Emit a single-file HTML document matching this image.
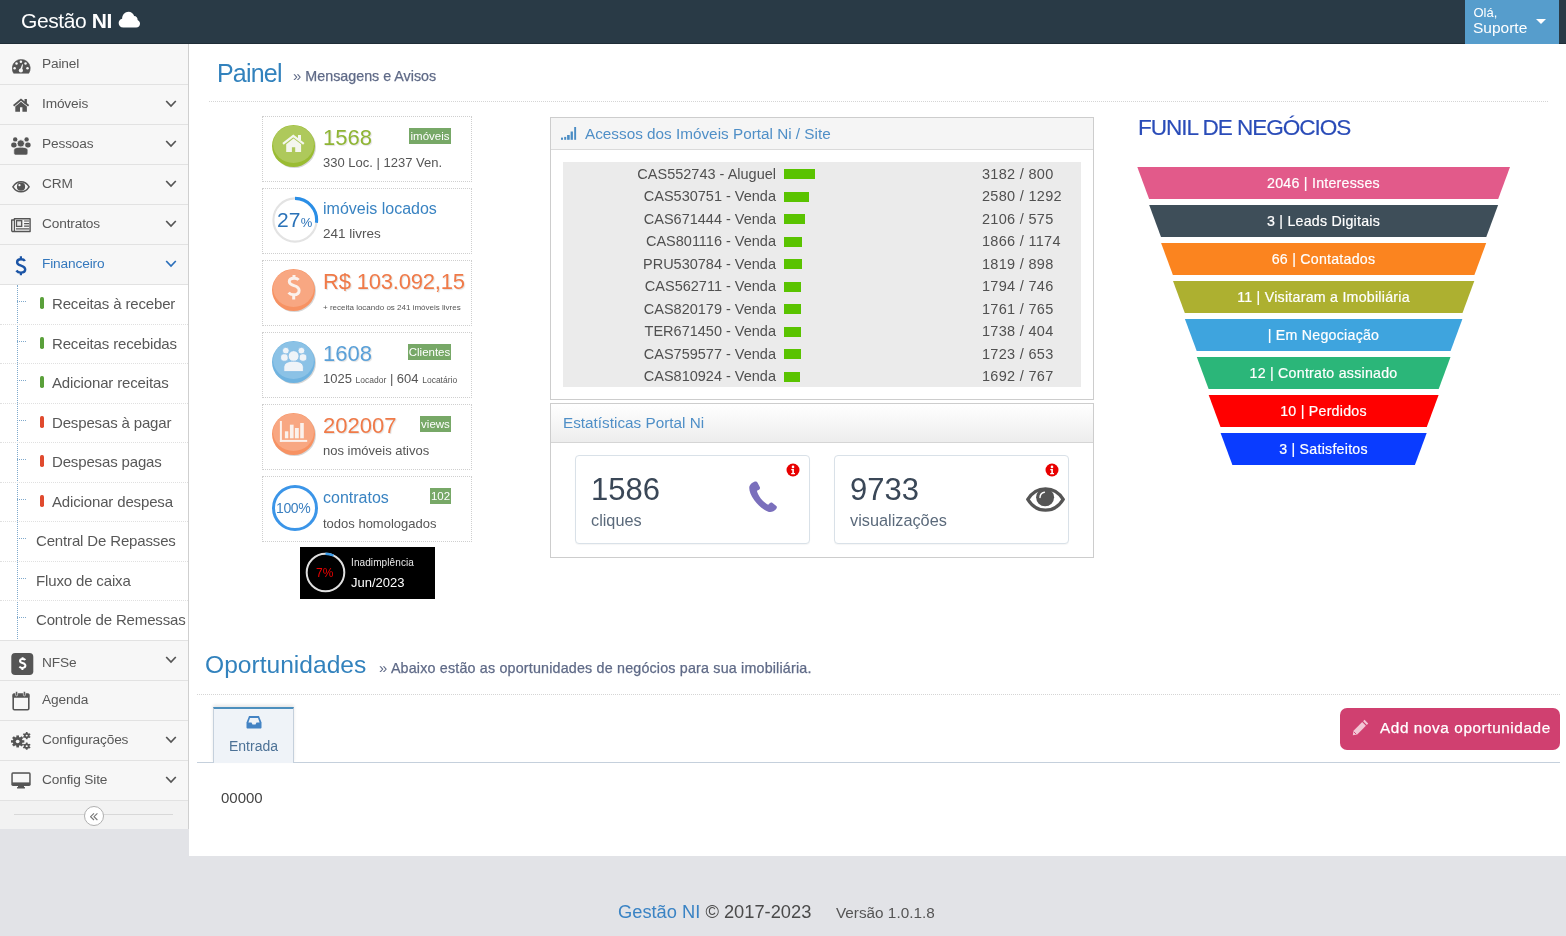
<!DOCTYPE html><html><head><meta charset="utf-8"><style>
*{box-sizing:border-box;margin:0;padding:0}
html,body{width:1566px;height:936px;overflow:hidden}
body{-webkit-font-smoothing:antialiased;will-change:transform;font-family:"Liberation Sans",sans-serif;background:#e2e3e7;position:relative;color:#555}
.abs{position:absolute}
.nw{white-space:nowrap}
#nav{left:0;top:0;width:1566px;height:44px;background:#293a46;border-bottom:1px solid #1f2d37}
#logo{left:21px;top:9px;color:#fff;font-size:21px;line-height:24px;white-space:nowrap;letter-spacing:-0.4px}
#user{left:1465px;top:0;width:94px;height:44px;background:#569dcc;color:#fff}
#side{left:0;top:44px;width:189px;height:785px;background:#f7f7f7;border-right:1px solid #cfcfcf}
.mi{position:absolute;left:0;width:188px;height:40px;border-bottom:1px solid #e2e2e2;background:#f7f7f7}
.mi .t{position:absolute;left:42px;top:10.7px;font-size:13.7px;letter-spacing:-0.15px;line-height:16px;color:#585858;white-space:nowrap}
.mi svg{position:absolute}
#main{left:189px;top:44px;width:1377px;height:812px;background:#fff}
.si{position:absolute;left:0;width:188px;height:40px;border-bottom:1px dotted #e0e0e0}
.si .t{position:absolute;top:9.5px;font-size:15px;letter-spacing:-0.15px;line-height:18px;color:#585858;white-space:nowrap}
.si .tick{position:absolute;left:17px;top:16px;width:9px;border-top:1px dotted #7fa9cc}
.si .bar{position:absolute;left:40.2px;top:12.4px;width:3.4px;height:11.8px;border-radius:1.7px}
.ib{position:absolute;left:262px;width:210px;height:66px;border:1px dotted #cfcfcf;background:#fff}
.lab{position:absolute;background:#77a867;color:#fff;font-size:11.5px;line-height:16px;height:16px;text-align:center;white-space:nowrap}
.row td{}
</style></head><body>
<div id="nav" class="abs"><div id="logo" class="abs">Gestão <b>NI</b><svg width="23" height="17" viewBox="0 0 28 20" preserveAspectRatio="none" style="position:relative;top:0px;margin-left:6px"><path d="M6.5 19.5C3 19.5 0.8 17 0.8 14.2 0.8 11.6 2.6 9.6 5 9.2 5 4.6 8.5 1 12.8 1 16 1 18.7 3 19.7 5.8 22.3 5.9 24.1 8 23.9 10.6 25.6 11.4 26.8 13 26.8 15 26.8 17.6 24.8 19.5 22.2 19.5Z" fill="#fff"/></svg></div></div>
<div id="user" class="abs"><div class="abs nw" style="left:8.5px;top:5.7px;font-size:13px;line-height:14px">Olá,</div><div class="abs nw" style="left:8px;top:19px;font-size:15.5px;line-height:17px">Suporte</div><svg class="abs" style="left:71.3px;top:19.1px" width="10" height="5" viewBox="0 0 10 5"><path d="M0 0H10L5 5Z" fill="#fff"/></svg></div>
<div id="side" class="abs">
<div class="mi" style="top:0;height:41px;padding-top:1px"><div class="abs" style="left:0;top:1px;width:188px;height:40px"><svg style="left:12px;top:14px" width="19" height="15" viewBox="0 0 19 15"><path d="M1.6 14.2A9 9 0 1 1 16.8 14.2Z" fill="#555" stroke="#555" stroke-width="0.6" stroke-linejoin="round"/><g fill="#f7f7f7"><circle cx="8.9" cy="2.8" r="1.25"/><circle cx="4.5" cy="4.6" r="1.25"/><circle cx="13.5" cy="4.6" r="1.25"/><circle cx="2.6" cy="9.2" r="1.25"/><circle cx="15.5" cy="9.2" r="1.25"/><circle cx="8.9" cy="11.5" r="2.1"/><path d="M7.9 11.3L10.2 5.2 11 5.4 9.9 11.7Z"/></g></svg><div class="t">Painel</div></div></div>
<div class="mi" style="top:41px"><svg style="left:13px;top:13px" width="17" height="15" viewBox="0 0 17 15"><path d="M0.6 7.8L8 1.6 15.6 7.8" fill="none" stroke="#555" stroke-width="1.8"/><rect x="11.5" y="1" width="2.4" height="4.6" fill="#555"/><path d="M2.3 8.4L8 3.8 13.9 8.4V13.8H9.4V9.3H7V13.8H2.3Z" fill="#555"/></svg><div class="t">Imóveis</div><svg style="left:165px;top:15.3px" width="12" height="8" viewBox="0 0 12 8"><path d="M1.2 1L6 6 10.8 1" fill="none" stroke="#555" stroke-width="1.7"/></svg></div>
<div class="mi" style="top:81px"><svg style="left:11px;top:11.5px" width="20" height="19" viewBox="0 0 20 19"><g fill="#555"><circle cx="4.2" cy="2.4" r="2.2"/><circle cx="15.6" cy="2.4" r="2.2"/><rect x="0.2" y="5.4" width="5.4" height="5" rx="2.2"/><rect x="14.2" y="5.4" width="5.4" height="5" rx="2.2"/></g><circle cx="9.8" cy="6.5" r="3.7" fill="#555" stroke="#f7f7f7" stroke-width="0.8"/><path d="M2.8 16V13.4C2.8 11.4 4.6 10.2 9.8 10.2 15 10.2 16.9 11.4 16.9 13.4V16C16.9 17.4 16 18.1 14.6 18.1H5.1C3.7 18.1 2.8 17.4 2.8 16Z" fill="#555" stroke="#f7f7f7" stroke-width="0.7"/></svg><div class="t">Pessoas</div><svg style="left:165px;top:15.3px" width="12" height="8" viewBox="0 0 12 8"><path d="M1.2 1L6 6 10.8 1" fill="none" stroke="#555" stroke-width="1.7"/></svg></div>
<div class="mi" style="top:121px"><svg style="left:12px;top:15.5px" width="19" height="12" viewBox="0 0 19 12"><path d="M0.9 5.8C3.2 2.2 6 0.8 9 0.8 12 0.8 14.8 2.2 17.1 5.8 14.8 9.4 12 10.8 9 10.8 6 10.8 3.2 9.4 0.9 5.8Z" fill="none" stroke="#555" stroke-width="1.5"/><circle cx="9" cy="5.7" r="4.1" fill="#555"/><circle cx="7.5" cy="4.2" r="1.1" fill="#f7f7f7"/></svg><div class="t">CRM</div><svg style="left:165px;top:15.3px" width="12" height="8" viewBox="0 0 12 8"><path d="M1.2 1L6 6 10.8 1" fill="none" stroke="#555" stroke-width="1.7"/></svg></div>
<div class="mi" style="top:161px"><svg style="left:11px;top:13px" width="21" height="15" viewBox="0 0 21 15"><path d="M3.4 0.7H19.1V13.5H1.9C1.2 13.5 0.7 13 0.7 12.3V2H3.4Z" fill="none" stroke="#555" stroke-width="1.4" stroke-linejoin="round"/><path d="M3.4 1V13" stroke="#555" stroke-width="1.2"/><rect x="5.5" y="2.7" width="5.2" height="5.7" fill="#e6e6e6" stroke="#555" stroke-width="1.3"/><path d="M13.1 3H18.2M13.1 5.6H18.2M13.1 8.2H18.2M4.9 10.9H18.2" stroke="#555" stroke-width="1.2"/></svg><div class="t">Contratos</div><svg style="left:165px;top:15.3px" width="12" height="8" viewBox="0 0 12 8"><path d="M1.2 1L6 6 10.8 1" fill="none" stroke="#555" stroke-width="1.7"/></svg></div>
<div class="mi" style="top:201px"><svg style="left:15px;top:11px" width="12" height="20" viewBox="0 0 12 20"><path d="M9.9 5C9.2 3.7 7.7 3.2 5.9 3.2 3.6 3.2 2.1 4.4 2.1 6.2 2.1 8.1 3.8 9 6.1 9.7 8.6 10.5 10.2 11.6 10.2 13.6 10.2 15.6 8.4 16.6 5.9 16.6 3.8 16.6 2.3 15.9 1.4 14.5" fill="none" stroke="#1c55a6" stroke-width="2.4"/><path d="M5.9 0.2V3.4M5.9 16.3V19.3" stroke="#1c55a6" stroke-width="2.2"/></svg><div class="t" style="color:#3478bd">Financeiro</div><svg style="left:165px;top:15.3px" width="12" height="8" viewBox="0 0 12 8"><path d="M1.2 1L6 6 10.8 1" fill="none" stroke="#2b6fba" stroke-width="1.7"/></svg></div>
<div class="abs" style="left:0;top:241px;width:188px;height:356px;background:#fff">
<div class="abs" style="left:17px;top:0;height:356px;border-left:1px dotted #7fa9cc"></div>
<div class="si" style="top:0px;height:40px;"><div class="tick"></div><div class="bar" style="background:#5aa03a"></div><div class="t" style="left:52px">Receitas à receber</div></div>
<div class="si" style="top:40px;height:39px;"><div class="tick"></div><div class="bar" style="background:#5aa03a"></div><div class="t" style="left:52px">Receitas recebidas</div></div>
<div class="si" style="top:79px;height:40px;"><div class="tick"></div><div class="bar" style="background:#5aa03a"></div><div class="t" style="left:52px">Adicionar receitas</div></div>
<div class="si" style="top:119px;height:39px;"><div class="tick"></div><div class="bar" style="background:#e04a2e"></div><div class="t" style="left:52px">Despesas à pagar</div></div>
<div class="si" style="top:158px;height:40px;"><div class="tick"></div><div class="bar" style="background:#e04a2e"></div><div class="t" style="left:52px">Despesas pagas</div></div>
<div class="si" style="top:198px;height:39px;"><div class="tick"></div><div class="bar" style="background:#e04a2e"></div><div class="t" style="left:52px">Adicionar despesa</div></div>
<div class="si" style="top:237px;height:40px;"><div class="tick"></div><div class="t" style="left:36px">Central De Repasses</div></div>
<div class="si" style="top:277px;height:39px;"><div class="tick"></div><div class="t" style="left:36px">Fluxo de caixa</div></div>
<div class="si" style="top:316px;height:40px;border-bottom:none;"><div class="tick"></div><div class="t" style="left:36px">Controle de Remessas</div></div>
</div>
<div class="abs" style="left:0;top:596px;width:188px;border-top:1px solid #e2e2e2"></div>
<div class="mi" style="top:597px"><svg style="left:11px;top:11px" width="23" height="23" viewBox="0 0 23 23"><rect x="0.3" y="1" width="22" height="22" rx="3.8" fill="#555"/><path d="M14.3 8C13.9 7.4 13 7 11.6 7 10 7 9 7.8 9 8.9 9 10.1 10 10.6 11.5 11 13.3 11.5 14.4 12.2 14.4 13.6 14.4 15 13.2 15.9 11.4 15.9 10.1 15.9 9 15.4 8.4 14.7" fill="none" stroke="#fff" stroke-width="2"/><path d="M11.6 5.2V7.3M11.4 15.6V17.9" stroke="#fff" stroke-width="2"/></svg><div class="t" style="top:13.5px">NFSe</div><svg style="left:165px;top:15.3px" width="12" height="8" viewBox="0 0 12 8"><path d="M1.2 1L6 6 10.8 1" fill="none" stroke="#555" stroke-width="1.7"/></svg></div>
<div class="mi" style="top:637px"><svg style="left:12px;top:10px" width="19" height="20" viewBox="0 0 19 20"><rect x="1.2" y="3.4" width="15.6" height="15.3" rx="1.2" fill="none" stroke="#555" stroke-width="1.6"/><rect x="0.6" y="2.6" width="16.8" height="4.2" rx="1" fill="#555"/><rect x="3.6" y="0.5" width="2" height="4.4" rx="0.9" fill="#555" stroke="#f7f7f7" stroke-width="0.6"/><rect x="11.4" y="0.5" width="2" height="4.4" rx="0.9" fill="#555" stroke="#f7f7f7" stroke-width="0.6"/></svg><div class="t">Agenda</div></div>
<div class="mi" style="top:677px"><svg style="left:11px;top:11px" width="20" height="18" viewBox="0 0 21 21" preserveAspectRatio="none"><g fill="#555"><circle cx="7" cy="11" r="5.2"/><g transform="translate(7 11)"><rect x="-1.4" y="-7" width="2.8" height="14"/><rect x="-1.4" y="-7" width="2.8" height="14" transform="rotate(45)"/><rect x="-1.4" y="-7" width="2.8" height="14" transform="rotate(90)"/><rect x="-1.4" y="-7" width="2.8" height="14" transform="rotate(135)"/></g><circle cx="16.5" cy="4.2" r="3"/><g transform="translate(16.5 4.2)"><rect x="-0.9" y="-4.2" width="1.8" height="8.4"/><rect x="-0.9" y="-4.2" width="1.8" height="8.4" transform="rotate(60)"/><rect x="-0.9" y="-4.2" width="1.8" height="8.4" transform="rotate(120)"/></g><circle cx="16.5" cy="16.5" r="3"/><g transform="translate(16.5 16.5)"><rect x="-0.9" y="-4.2" width="1.8" height="8.4"/><rect x="-0.9" y="-4.2" width="1.8" height="8.4" transform="rotate(60)"/><rect x="-0.9" y="-4.2" width="1.8" height="8.4" transform="rotate(120)"/></g></g><circle cx="7" cy="11" r="2" fill="#f7f7f7"/><circle cx="16.5" cy="4.2" r="1.1" fill="#f7f7f7"/><circle cx="16.5" cy="16.5" r="1.1" fill="#f7f7f7"/></svg><div class="t">Configurações</div><svg style="left:165px;top:15.3px" width="12" height="8" viewBox="0 0 12 8"><path d="M1.2 1L6 6 10.8 1" fill="none" stroke="#555" stroke-width="1.7"/></svg></div>
<div class="mi" style="top:717px"><svg style="left:11px;top:10.5px" width="20" height="18" viewBox="0 0 20 18"><rect x="0.3" y="0.3" width="19.4" height="13.6" rx="1.6" fill="#555"/><rect x="1.8" y="1.8" width="16.4" height="8.6" fill="#f7f7f7"/><rect x="7" y="13.5" width="6" height="2" fill="#555"/><rect x="6" y="15" width="8" height="1.6" rx="0.5" fill="#555"/></svg><div class="t">Config Site</div><svg style="left:165px;top:15.3px" width="12" height="8" viewBox="0 0 12 8"><path d="M1.2 1L6 6 10.8 1" fill="none" stroke="#555" stroke-width="1.7"/></svg></div>
<div class="abs" style="left:0;top:757px;width:188px;height:28px;background:#f2f2f2"><div class="abs" style="left:14px;top:13px;width:159px;border-top:1px solid #d8d8d8"></div><div class="abs" style="left:84px;top:5px;width:20px;height:20px;border-radius:50%;border:1.3px solid #b0b0b0;background:#fff"></div><svg class="abs" style="left:89.8px;top:11.6px" width="9" height="8" viewBox="0 0 9 8"><path d="M4 0.4L0.6 3.7 4 7M7.4 0.4L4 3.7 7.4 7" fill="none" stroke="#777" stroke-width="1.1"/></svg></div>
</div>
<div id="main" class="abs"></div>
<div class="abs nw" style="left:217px;top:59px;font-size:25px;letter-spacing:-0.8px;line-height:28px;color:#3282bd">Painel</div>
<div class="abs nw" style="left:293px;top:67px;font-size:14.3px;line-height:18px;color:#5f6a87;-webkit-text-stroke:0.25px #5f6a87"><span style="font-size:15px;-webkit-text-stroke:0">&raquo;</span> Mensagens e Avisos</div>
<div class="abs" style="left:209px;top:101px;width:1339px;border-top:1px dotted #d5d5d5"></div>
<div class="ib" style="top:116px"></div>
<div class="ib" style="top:188px"></div>
<div class="ib" style="top:260px"></div>
<div class="ib" style="top:332px"></div>
<div class="ib" style="top:404px"></div>
<div class="ib" style="top:476px"></div>
<svg class="abs" style="left:272px;top:125px" width="46" height="45" viewBox="0 0 46 45"><ellipse cx="22.5" cy="22" rx="21.5" ry="21" fill="rgba(0,0,0,0.16)"/><ellipse cx="21.5" cy="21" rx="21.5" ry="21" fill="#9abc32"/><ellipse cx="21.5" cy="19.2" rx="20.4" ry="18.7" fill="rgba(255,255,255,0.2)"/><path d="M11 18.9L21.3 10.8 31.8 18.9" fill="none" stroke="#f4f6ee" stroke-width="2.2"/><rect x="26" y="10" width="3" height="5" fill="#f4f6ee"/><path d="M14.2 19.2L21.5 13.6 29.1 19.2V26.9H23.2V22.2H19.9V26.9H14.2Z" fill="#f4f6ee"/></svg>
<div class="abs nw" style="left:323px;top:125px;font-size:22px;line-height:26px;color:#8fb534;text-shadow:1px 1px 1px rgba(0,0,0,0.12)">1568</div>
<div class="lab" style="left:409px;top:128px;width:42px">imóveis</div>
<div class="abs nw" style="left:323px;top:155px;font-size:13px;line-height:15px;color:#555">330 Loc. | 1237 Ven.</div>
<svg class="abs" style="left:271px;top:196px" width="48" height="48" viewBox="0 0 48 48"><circle cx="24" cy="24" r="21.6" fill="none" stroke="#e3e3e3" stroke-width="2.1"/><path d="M24 2.3999999999999986A21.6 21.6 0 0 1 45.43 26.71" fill="none" stroke="#2a8ee6" stroke-width="3.1"/></svg>
<div class="abs nw" style="left:277px;top:209.3px;font-size:21px;line-height:22px;color:#2a72b8;letter-spacing:0px">27<span style="font-size:13px;letter-spacing:-0.3px;margin-left:0.5px">%</span></div>
<div class="abs nw" style="left:323px;top:199px;font-size:16px;line-height:19px;color:#3983c2">imóveis locados</div>
<div class="abs nw" style="left:323px;top:226px;font-size:13.5px;line-height:16px;color:#555">241 livres</div>
<svg class="abs" style="left:272px;top:269px" width="46" height="45" viewBox="0 0 46 45"><ellipse cx="22.5" cy="22" rx="21.5" ry="21" fill="rgba(0,0,0,0.16)"/><ellipse cx="21.5" cy="21" rx="21.5" ry="21" fill="#f79263"/><ellipse cx="21.5" cy="19.2" rx="20.4" ry="18.7" fill="rgba(255,255,255,0.2)"/><path d="M26.6 10.9C25.8 9.9 24.3 9.2 22 9.2 19 9.2 17.3 10.6 17.3 12.6 17.3 14.8 19.2 15.8 22 16.6 25.3 17.5 27.1 18.7 27.1 21.4 27.1 24.2 24.8 25.7 21.7 25.7 19.4 25.7 17.6 24.8 16.6 23.6" fill="none" stroke="#fbf1ec" stroke-width="3"/><path d="M22 6V10M21.7 25V30.6" stroke="#fbf1ec" stroke-width="3"/></svg>
<div class="abs nw" style="left:323px;top:269px;font-size:22px;line-height:26px;color:#f07a48;text-shadow:1px 1px 1px rgba(0,0,0,0.12);letter-spacing:-0.2px">R$ 103.092,15</div>
<div class="abs nw" style="left:323px;top:303px;font-size:8px;line-height:10px;color:#555">+ receita locando os 241 imóveis livres</div>
<svg class="abs" style="left:272px;top:341px" width="46" height="45" viewBox="0 0 46 45"><ellipse cx="22.5" cy="22" rx="21.5" ry="21" fill="rgba(0,0,0,0.16)"/><ellipse cx="21.5" cy="21" rx="21.5" ry="21" fill="#6fb3e0"/><ellipse cx="21.5" cy="19.2" rx="20.4" ry="18.7" fill="rgba(255,255,255,0.2)"/><g fill="#eff4f8" stroke="#84bbe4" stroke-width="0.8"><circle cx="13.8" cy="9.7" r="3.4"/><circle cx="29.4" cy="9.7" r="3.4"/><rect x="8.6" y="12.8" width="7.6" height="7.4" rx="3"/><rect x="27.2" y="12.8" width="7.6" height="7.4" rx="3"/><circle cx="21.6" cy="15.1" r="5.4"/><path d="M11.8 30.6V26.5C11.8 22.6 15 20.2 21.6 20.2 28.2 20.2 31.4 22.6 31.4 26.5V30.6Z"/></g></svg>
<div class="abs nw" style="left:323px;top:341px;font-size:22px;line-height:26px;color:#5aa0d8;text-shadow:1px 1px 1px rgba(0,0,0,0.12)">1608</div>
<div class="lab" style="left:408px;top:344px;width:43px">Clientes</div>
<div class="abs nw" style="left:323px;top:371px;font-size:13px;line-height:15px;color:#555">1025 <span style="font-size:8.5px">Locador</span> | 604 <span style="font-size:8.5px">Locatário</span></div>
<svg class="abs" style="left:272px;top:413px" width="46" height="45" viewBox="0 0 46 45"><ellipse cx="22.5" cy="22" rx="21.5" ry="21" fill="rgba(0,0,0,0.16)"/><ellipse cx="21.5" cy="21" rx="21.5" ry="21" fill="#f79263"/><ellipse cx="21.5" cy="19.2" rx="20.4" ry="18.7" fill="rgba(255,255,255,0.2)"/><g fill="#fbf1ec"><rect x="7.9" y="8" width="2" height="20.9"/><rect x="7.9" y="26.9" width="27.3" height="2"/><rect x="12.9" y="18.3" width="3.4" height="7"/><rect x="17.9" y="11.7" width="3.7" height="13.6"/><rect x="22.9" y="15" width="3.9" height="10.3"/><rect x="28.2" y="10" width="3.6" height="15.3"/></g></svg>
<div class="abs nw" style="left:323px;top:413px;font-size:22px;line-height:26px;color:#f07a48;text-shadow:1px 1px 1px rgba(0,0,0,0.12)">202007</div>
<div class="lab" style="left:420px;top:416px;width:31px">views</div>
<div class="abs nw" style="left:323px;top:443px;font-size:13px;line-height:15px;color:#555">nos imóveis ativos</div>
<svg class="abs" style="left:271px;top:484px" width="48" height="48" viewBox="0 0 48 48"><circle cx="24" cy="24" r="21.5" fill="none" stroke="#3b95e8" stroke-width="3"/></svg>
<div class="abs nw" style="left:276px;top:500px;font-size:14px;line-height:16px;color:#3a7fc0;letter-spacing:-0.4px">100%</div>
<div class="abs nw" style="left:323px;top:488px;font-size:16px;line-height:19px;color:#3983c2">contratos</div>
<div class="lab" style="left:430px;top:488px;width:21px">102</div>
<div class="abs nw" style="left:323px;top:516px;font-size:13px;line-height:15px;color:#555">todos homologados</div>
<div class="abs" style="left:300px;top:547px;width:135px;height:52px;background:#000"><svg class="abs" style="left:5px;top:5px" width="42" height="42" viewBox="0 0 42 42"><circle cx="20.5" cy="20.5" r="18.8" fill="none" stroke="#e0e0e0" stroke-width="2"/><path d="M20.5 1.6999999999999993A18.8 18.8 0 0 1 28.50 3.49" fill="none" stroke="#3a9be8" stroke-width="2.4"/></svg><div class="abs nw" style="left:16px;top:18.5px;font-size:12px;line-height:14px;color:#e00">7%</div><div class="abs nw" style="left:51px;top:9.5px;font-size:10px;line-height:11px;color:#e8e8e8;letter-spacing:0.1px">Inadimplência</div><div class="abs nw" style="left:51px;top:28px;font-size:13px;line-height:15px;color:#fff">Jun/2023</div></div>
<div class="abs" style="left:550px;top:117px;width:544px;height:283px;border:1px solid #cdcdcd;background:#fff"><div class="abs" style="left:0;top:0;width:542px;height:32px;background:#f5f5f5;border-bottom:1px solid #dadada"></div><svg class="abs" style="left:10px;top:9px" width="16" height="14" viewBox="0 0 16 14"><g fill="#4a8cc4"><rect x="0" y="10.6" width="2" height="2.2"/><rect x="3.2" y="9.9" width="2" height="2.9"/><rect x="6.1" y="8" width="2.6" height="4.8"/><rect x="9.6" y="4.5" width="2.3" height="8.3"/><rect x="13.2" y="0" width="1.9" height="12.8"/></g></svg><div class="abs nw" style="left:34px;top:7px;font-size:15.3px;line-height:18px;color:#4f8fc7">Acessos dos Imóveis Portal Ni / Site</div><div class="abs" style="left:12px;top:44px;width:518px;height:225px;background:#ebebeb"></div></div>
<div class="abs nw" style="right:790px;top:164.5px;font-size:14.5px;line-height:18px;color:#505050">CAS552743 - Aluguel</div>
<div class="abs" style="left:784px;top:169.0px;width:31px;height:10px;background:#5ac300"></div>
<div class="abs nw" style="left:982px;top:164.5px;font-size:14.5px;line-height:18px;color:#505050;letter-spacing:0.3px">3182 / 800</div>
<div class="abs nw" style="right:790px;top:187.0px;font-size:14.5px;line-height:18px;color:#505050">CAS530751 - Venda</div>
<div class="abs" style="left:784px;top:191.5px;width:25px;height:10px;background:#5ac300"></div>
<div class="abs nw" style="left:982px;top:187.0px;font-size:14.5px;line-height:18px;color:#505050;letter-spacing:0.3px">2580 / 1292</div>
<div class="abs nw" style="right:790px;top:209.5px;font-size:14.5px;line-height:18px;color:#505050">CAS671444 - Venda</div>
<div class="abs" style="left:784px;top:214.0px;width:21px;height:10px;background:#5ac300"></div>
<div class="abs nw" style="left:982px;top:209.5px;font-size:14.5px;line-height:18px;color:#505050;letter-spacing:0.3px">2106 / 575</div>
<div class="abs nw" style="right:790px;top:232.0px;font-size:14.5px;line-height:18px;color:#505050">CAS801116 - Venda</div>
<div class="abs" style="left:784px;top:236.5px;width:18px;height:10px;background:#5ac300"></div>
<div class="abs nw" style="left:982px;top:232.0px;font-size:14.5px;line-height:18px;color:#505050;letter-spacing:0.3px">1866 / 1174</div>
<div class="abs nw" style="right:790px;top:254.5px;font-size:14.5px;line-height:18px;color:#505050">PRU530784 - Venda</div>
<div class="abs" style="left:784px;top:259.0px;width:18px;height:10px;background:#5ac300"></div>
<div class="abs nw" style="left:982px;top:254.5px;font-size:14.5px;line-height:18px;color:#505050;letter-spacing:0.3px">1819 / 898</div>
<div class="abs nw" style="right:790px;top:277.0px;font-size:14.5px;line-height:18px;color:#505050">CAS562711 - Venda</div>
<div class="abs" style="left:784px;top:281.5px;width:17px;height:10px;background:#5ac300"></div>
<div class="abs nw" style="left:982px;top:277.0px;font-size:14.5px;line-height:18px;color:#505050;letter-spacing:0.3px">1794 / 746</div>
<div class="abs nw" style="right:790px;top:299.5px;font-size:14.5px;line-height:18px;color:#505050">CAS820179 - Venda</div>
<div class="abs" style="left:784px;top:304.0px;width:17px;height:10px;background:#5ac300"></div>
<div class="abs nw" style="left:982px;top:299.5px;font-size:14.5px;line-height:18px;color:#505050;letter-spacing:0.3px">1761 / 765</div>
<div class="abs nw" style="right:790px;top:322.0px;font-size:14.5px;line-height:18px;color:#505050">TER671450 - Venda</div>
<div class="abs" style="left:784px;top:326.5px;width:17px;height:10px;background:#5ac300"></div>
<div class="abs nw" style="left:982px;top:322.0px;font-size:14.5px;line-height:18px;color:#505050;letter-spacing:0.3px">1738 / 404</div>
<div class="abs nw" style="right:790px;top:344.5px;font-size:14.5px;line-height:18px;color:#505050">CAS759577 - Venda</div>
<div class="abs" style="left:784px;top:349.0px;width:17px;height:10px;background:#5ac300"></div>
<div class="abs nw" style="left:982px;top:344.5px;font-size:14.5px;line-height:18px;color:#505050;letter-spacing:0.3px">1723 / 653</div>
<div class="abs nw" style="right:790px;top:367.0px;font-size:14.5px;line-height:18px;color:#505050">CAS810924 - Venda</div>
<div class="abs" style="left:784px;top:371.5px;width:16px;height:10px;background:#5ac300"></div>
<div class="abs nw" style="left:982px;top:367.0px;font-size:14.5px;line-height:18px;color:#505050;letter-spacing:0.3px">1692 / 767</div>
<div class="abs" style="left:550px;top:403px;width:544px;height:155px;border:1px solid #cdcdcd;background:#fff"><div class="abs" style="left:0;top:0;width:542px;height:39px;background:linear-gradient(#ffffff,#ededed);border-bottom:1px solid #d5d5d5"></div><div class="abs nw" style="left:12px;top:10px;font-size:15.3px;line-height:18px;color:#4f8fc7">Estatísticas Portal Ni</div></div>
<div class="abs" style="left:575px;top:455px;width:235px;height:89px;border:1px solid #d9e1e8;border-radius:4px;background:#fff;box-shadow:0 1px 1px rgba(0,0,0,0.04)"><div class="abs nw" style="left:15px;top:17px;font-size:31px;line-height:34px;color:#3a4757">1586</div><div class="abs nw" style="left:15px;top:55px;font-size:16.3px;line-height:19px;color:#5b6a7b">cliques</div><svg class="abs" style="left:209.7px;top:6.7px" width="14" height="14" viewBox="0 0 14 14"><circle cx="7" cy="7" r="6.5" fill="#e80000"/><circle cx="7" cy="3.9" r="1.3" fill="#fff"/><path d="M5.3 6H7.9V10H9V11.3H5.2V10H6.3V7.3H5.3Z" fill="#fff"/></svg><svg class="abs" style="left:169px;top:24px" width="35" height="35" viewBox="0 0 32 32"><path d="M8.5 1.5C6.8 2.2 4.5 3.8 4 6 3.5 8.8 4.8 13.5 8.5 18.5 12.2 23.5 17 27.5 21.2 29 24 30 26.5 28.5 28.5 26.5 29.3 25.7 29.4 24.5 28.6 23.8L25.2 21C24.4 20.4 23.3 20.4 22.6 21.2L21.2 22.7C19.2 21.8 16.6 19.6 14.4 16.8 12.4 14.2 11.3 11.6 10.9 9.8L12.8 8.8C13.7 8.3 14 7.2 13.5 6.3L11.5 2.4C11 1.4 9.6 1 8.5 1.5Z" fill="#7a6fbc"/></svg></div>
<div class="abs" style="left:834px;top:455px;width:235px;height:89px;border:1px solid #d9e1e8;border-radius:4px;background:#fff;box-shadow:0 1px 1px rgba(0,0,0,0.04)"><div class="abs nw" style="left:15px;top:17px;font-size:31px;line-height:34px;color:#3a4757">9733</div><div class="abs nw" style="left:15px;top:55px;font-size:16.3px;line-height:19px;color:#5b6a7b">visualizações</div><svg class="abs" style="left:209.7px;top:6.7px" width="14" height="14" viewBox="0 0 14 14"><circle cx="7" cy="7" r="6.5" fill="#e80000"/><circle cx="7" cy="3.9" r="1.3" fill="#fff"/><path d="M5.3 6H7.9V10H9V11.3H5.2V10H6.3V7.3H5.3Z" fill="#fff"/></svg><svg class="abs" style="left:191px;top:31px" width="39" height="26" viewBox="0 0 39 26"><path d="M1.8 12.4C6.2 5 12.2 1.8 19.5 1.8 26.8 1.8 32.8 5 37.2 12.4 32.8 19.6 26.8 23.2 19.5 23.2 12.2 23.2 6.2 19.6 1.8 12.4Z" fill="none" stroke="#555" stroke-width="3.3"/><circle cx="19.1" cy="10.3" r="9" fill="#555"/><path d="M14 10.6A5.6 5.6 0 0 1 18.4 5.2" fill="none" stroke="#fff" stroke-width="1.4" stroke-linecap="round"/></svg></div>
<div class="abs nw" style="left:1138px;top:115px;font-size:22.6px;line-height:26px;color:#2a4cb8;letter-spacing:-1.05px;-webkit-text-stroke:0.15px #2a4cb8">FUNIL DE NEGÓCIOS</div>
<svg class="abs" style="left:1130px;top:160px" width="390" height="310" viewBox="1130 160 390 310"><path d="M1137.3 167H1510.0L1498.2 199H1149.1Z" fill="#e25a8a"/><path d="M1149.2 205H1498.1L1486.3 237H1161.0Z" fill="#3e4e59"/><path d="M1161.1 243H1486.2L1474.4 275H1172.9Z" fill="#fb841f"/><path d="M1173.0 281H1474.3L1462.5 313H1184.8Z" fill="#adb030"/><path d="M1184.9 319H1462.4L1450.6 351H1196.7Z" fill="#3ea4de"/><path d="M1196.8 357H1450.5L1438.7 389H1208.6Z" fill="#2bb679"/><path d="M1208.7 395H1438.6L1426.8 427H1220.5Z" fill="#ff0000"/><path d="M1220.6 433H1426.7L1414.9 465H1232.4Z" fill="#0a3cff"/></svg>
<div class="abs nw" style="left:1137px;width:373px;text-align:center;top:174px;font-size:14.2px;letter-spacing:0.25px;-webkit-text-stroke:0.2px #fff;line-height:18px;color:#fff">2046 | Interesses</div>
<div class="abs nw" style="left:1137px;width:373px;text-align:center;top:212px;font-size:14.2px;letter-spacing:0.25px;-webkit-text-stroke:0.2px #fff;line-height:18px;color:#fff">3 | Leads Digitais</div>
<div class="abs nw" style="left:1137px;width:373px;text-align:center;top:250px;font-size:14.2px;letter-spacing:0.25px;-webkit-text-stroke:0.2px #fff;line-height:18px;color:#fff">66 | Contatados</div>
<div class="abs nw" style="left:1137px;width:373px;text-align:center;top:288px;font-size:14.2px;letter-spacing:0.25px;-webkit-text-stroke:0.2px #fff;line-height:18px;color:#fff">11 | Visitaram a Imobiliária</div>
<div class="abs nw" style="left:1137px;width:373px;text-align:center;top:326px;font-size:14.2px;letter-spacing:0.25px;-webkit-text-stroke:0.2px #fff;line-height:18px;color:#fff">| Em Negociação</div>
<div class="abs nw" style="left:1137px;width:373px;text-align:center;top:364px;font-size:14.2px;letter-spacing:0.25px;-webkit-text-stroke:0.2px #fff;line-height:18px;color:#fff">12 | Contrato assinado</div>
<div class="abs nw" style="left:1137px;width:373px;text-align:center;top:402px;font-size:14.2px;letter-spacing:0.25px;-webkit-text-stroke:0.2px #fff;line-height:18px;color:#fff">10 | Perdidos</div>
<div class="abs nw" style="left:1137px;width:373px;text-align:center;top:440px;font-size:14.2px;letter-spacing:0.25px;-webkit-text-stroke:0.2px #fff;line-height:18px;color:#fff">3 | Satisfeitos</div>
<div class="abs nw" style="left:205px;top:651px;font-size:24.6px;line-height:28px;color:#3282bd">Oportunidades</div>
<div class="abs nw" style="left:379px;top:659px;font-size:14.3px;letter-spacing:0.18px;line-height:18px;color:#5f6a87;-webkit-text-stroke:0.25px #5f6a87"><span style="font-size:15px;-webkit-text-stroke:0">&raquo;</span> Abaixo estão as oportunidades de negócios para sua imobiliária.</div>
<div class="abs" style="left:197px;top:694px;width:1363px;border-top:1px dotted #d5d5d5"></div>
<div class="abs" style="left:197px;top:762px;width:1363px;border-top:1px solid #c5d0dc"></div>
<div class="abs" style="left:213px;top:707px;width:81px;height:56px;background:#eff3f8;border:1px solid #c5d0dc;border-bottom:none;border-top:2px solid #4c8fbd;box-shadow:0 -2px 3px rgba(0,0,0,0.1)"><svg class="abs" style="left:32px;top:6.3px" width="16" height="14" viewBox="0 0 16 14"><path d="M3 1H13L15.5 7.5V12.5C15.5 13 15 13.5 14.5 13.5H1.5C1 13.5 0.5 13 0.5 12.5V7.5Z" fill="#4383c4"/><path d="M4 3H12L13.6 7.6H10.5L9.5 9.5H6.5L5.5 7.6H2.4Z" fill="#eff3f8"/></svg><div class="abs nw" style="left:0;width:79px;text-align:center;top:29.3px;font-size:14px;line-height:17px;color:#4c7196">Entrada</div></div>
<div class="abs" style="left:1340px;top:708px;width:220px;height:42px;background:#d04070;border-radius:7px"><svg class="abs" style="left:12px;top:11px" width="17" height="17" viewBox="0 0 17 17"><path d="M12.5 0.8L16.2 4.5 14.8 5.9 11.1 2.2Z" fill="#f3c6d5"/><path d="M10.2 3.1L13.9 6.8 5.2 15.5 0.8 16.2 1.5 11.8Z" fill="#f3c6d5"/><path d="M1.8 12.8L4.2 15.2" stroke="#d04070" stroke-width="0.9"/></svg><div class="abs nw" style="left:40px;top:10.3px;font-size:15.3px;line-height:20px;color:#fff;letter-spacing:0.6px;-webkit-text-stroke:0.25px #fff">Add nova oportunidade</div></div>
<div class="abs nw" style="left:221px;top:789px;font-size:15px;line-height:18px;color:#444">00000</div>
<div class="abs nw" style="left:618px;top:901px;font-size:18.3px;line-height:22px;color:#4a4a4a"><span style="color:#3a83c4">Gestão NI</span> © 2017-2023</div>
<div class="abs nw" style="left:836px;top:904px;font-size:15.3px;line-height:18px;color:#555">Versão 1.0.1.8</div>
</body></html>
